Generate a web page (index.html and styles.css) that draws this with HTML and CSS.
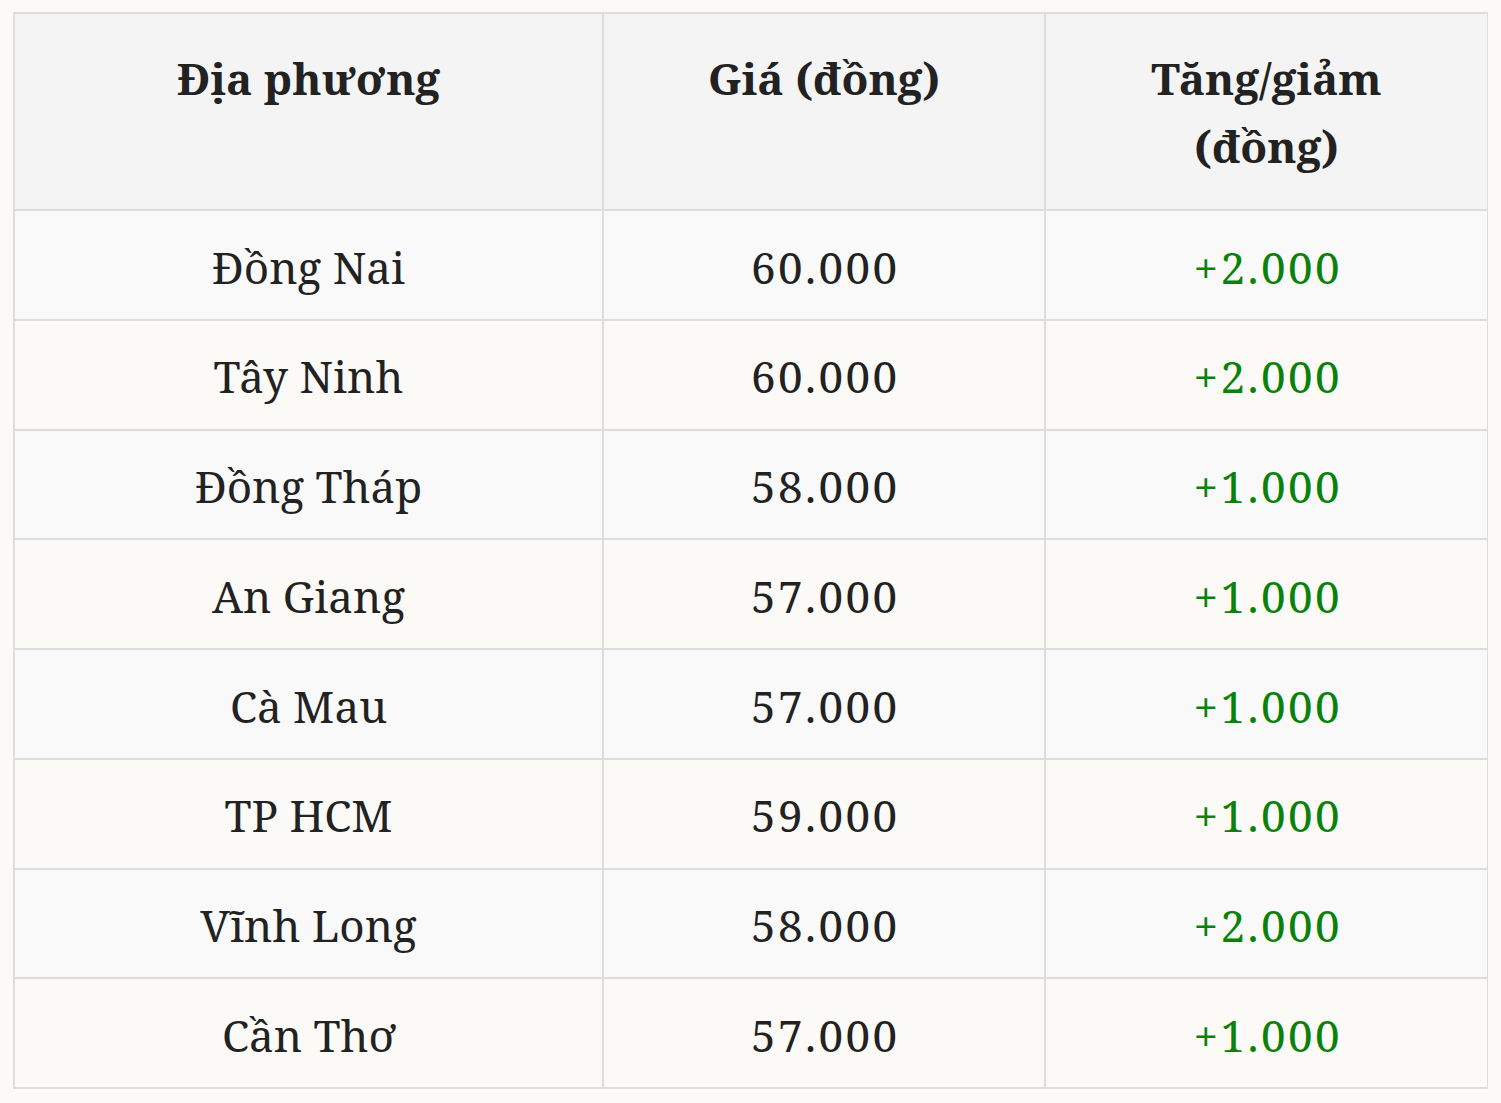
FILE: index.html
```html
<!DOCTYPE html>
<html lang="vi">
<head>
<meta charset="utf-8">
<title>Giá</title>
<link rel="stylesheet" href="styles.css">
</head>
<body>
<table class="price-table">
  <colgroup>
    <col class="c1"><col class="c2"><col class="c3">
  </colgroup>
  <thead>
    <tr><th>Địa phương</th><th>Giá (đồng)</th><th>Tăng/giảm<br>(đồng)</th></tr>
  </thead>
  <tbody>
    <tr><td>Đồng Nai</td><td class="num">60.000</td><td class="num up">+2.000</td></tr>
    <tr><td>Tây Ninh</td><td class="num">60.000</td><td class="num up">+2.000</td></tr>
    <tr><td>Đồng Tháp</td><td class="num">58.000</td><td class="num up">+1.000</td></tr>
    <tr><td>An Giang</td><td class="num">57.000</td><td class="num up">+1.000</td></tr>
    <tr><td>Cà Mau</td><td class="num">57.000</td><td class="num up">+1.000</td></tr>
    <tr><td>TP HCM</td><td class="num">59.000</td><td class="num up">+1.000</td></tr>
    <tr><td>Vĩnh Long</td><td class="num">58.000</td><td class="num up">+2.000</td></tr>
    <tr><td>Cần Thơ</td><td class="num">57.000</td><td class="num up">+1.000</td></tr>
  </tbody>
</table>
</body>
</html>
```

FILE: styles.css
```css
html, body {
  background: #fbfaf7;
}
body {
  margin: 12px 13px;
  font-family: "Noto Serif", "DejaVu Serif", "Liberation Serif", serif;
  color: #222;
}
.price-table {
  width: 1474px;
  border-collapse: collapse;
  table-layout: fixed;
  font-size: 44px;
  line-height: 68px;
}
.c1 { width: 589px; }
.c2 { width: 442px; }
.c3 { width: 443px; }
.price-table th,
.price-table td {
  border: 2px solid #dddddd;
  text-align: center;
}
.price-table th {
  background: #f4f4f4;
  font-weight: bold;
  vertical-align: top;
  padding: 30px 10px 29px;
}
.price-table td {
  padding: 21.5px 10px 18.25px;
  vertical-align: middle;
}
.price-table td.num {
  letter-spacing: 2.4px;
  text-indent: 2.4px;
}
.price-table tbody tr:nth-child(odd) td {
  background: #f9f9f9;
}
.price-table td.up {
  color: #0a820a;
}
```
